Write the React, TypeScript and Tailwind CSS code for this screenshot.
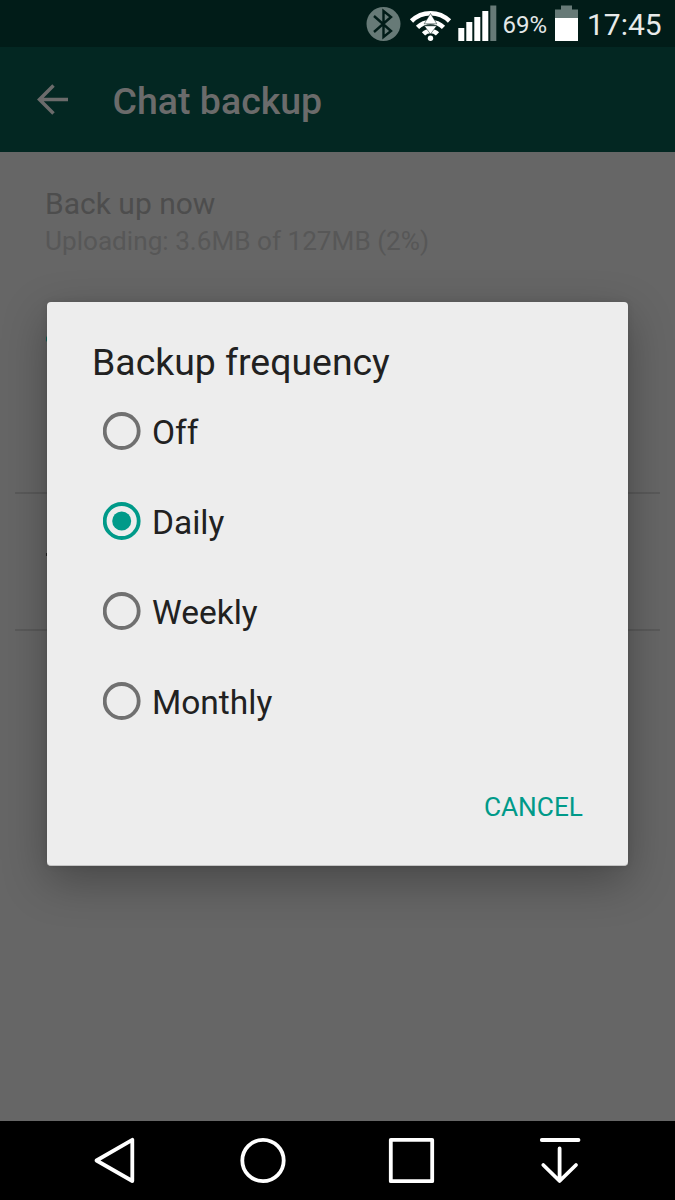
import { ReactNode } from "react";

const options = ["Off", "Daily", "Weekly", "Monthly"];

function StatusBar() {
  return (
    <div className="flex h-[47px] w-full bg-[#011c18]">
      <svg width="675" height="47" viewBox="0 0 675 47" className="absolute">
        {/* Bluetooth */}
        <circle cx="383.5" cy="24" r="17" fill="#677a77" />
        <path
          d="M374 16 L391 31 L383.5 37 V11 L391 17 L374 32"
          fill="none"
          stroke="#011c18"
          strokeWidth="2.4"
        />
        {/* Wi-Fi */}
        <g fill="none" stroke="#fff" strokeWidth="4.6">
          <path d="M411.5 21 A27 27 0 0 1 449.5 21" />
          <path d="M417.5 27.3 A18.5 18.5 0 0 1 443.5 27.3" />
          <path d="M423.5 33.8 A10 10 0 0 1 437.5 33.8" />
        </g>
        <circle cx="430.5" cy="38.3" r="2.7" fill="#fff" />
        <path
          d="M430.5 13.5 L436.8 23.8 H424.2 Z M424.2 25.8 H436.8 L430.5 34 Z"
          fill="#fff"
          stroke="#011c18"
          strokeWidth="0.5"
        />
        {/* Signal */}
        <g fill="#fff">
          <rect x="458.3" y="28" width="6" height="13" />
          <rect x="466.3" y="22" width="6" height="19" />
          <rect x="474.3" y="17" width="6" height="24" />
          <rect x="482.3" y="11" width="6" height="30" />
          <rect x="490.3" y="5.5" width="6" height="35.5" fill="#677a77" />
        </g>
        {/* Battery */}
        <path d="M561 5.5 H572 V9.5 H578 V18 H555 V9.5 H561 Z" fill="#677a77" />
        <rect x="555" y="18" width="23" height="23" fill="#fff" />
      </svg>
      <span className="ml-[502.5px] w-[84.5px] pt-[9px] text-[24px] leading-[32px] text-[#e4e8e8]">
        69%
      </span>
      <span className="pt-[5px] text-[30px] leading-[40px] text-[#e8ebea]">17:45</span>
    </div>
  );
}

function Radio({ checked, children }: { checked: boolean; children: ReactNode }) {
  return (
    <label className="flex h-[90px] items-center">
      <svg width="38" height="38" viewBox="0 0 38 38" className="mr-[11px] shrink-0">
        <circle
          cx="18.7"
          cy="19"
          r="17"
          fill="none"
          stroke={checked ? "#009a89" : "#707070"}
          strokeWidth="3.8"
        />
        {checked && <circle cx="18.7" cy="19" r="9.5" fill="#009a89" />}
      </svg>
      <span className="pt-[4px] text-[33.5px] leading-[40px]">{children}</span>
    </label>
  );
}

function NavBar() {
  return (
    <nav className="h-[79px] w-full bg-black">
      <svg
        width="675"
        height="79"
        viewBox="0 0 675 79"
        fill="none"
        stroke="#fff"
        strokeWidth="3.8"
        strokeLinecap="round"
        strokeLinejoin="round"
      >
        <path d="M96.5 39.5 L132.3 18.8 V60 Z" />
        <circle cx="263" cy="39.5" r="20.7" />
        <rect x="390.8" y="18.8" width="41.4" height="41.4" />
        <path d="M541.8 19 H578.5 M559.6 27.5 V59.5 M543.3 44 L559.6 60 L576 44" />
      </svg>
    </nav>
  );
}

export default function App() {
  return (
    <div className="relative flex h-[1200px] w-[675px] flex-col overflow-hidden bg-[#666666] font-['Roboto',sans-serif]">
      <StatusBar />

      <header className="flex h-[105px] items-center bg-[#032722] text-[#6b6b6b]">
        <svg width="32" height="32" viewBox="0 0 32 32" className="ml-[37px]">
          <path
            d="M31 15.5 H3 M16.5 1.5 L2.5 15.5 L16.5 29.5"
            fill="none"
            stroke="currentColor"
            strokeWidth="3.5"
          />
        </svg>
        <h1 className="ml-[43.5px] pt-[3px] text-[37.5px] leading-[44px] font-medium">
          Chat backup
        </h1>
      </header>

      <main className="flex grow flex-col">
        <div className="h-[184px] pt-[33px] pl-[45px]">
          <p className="text-[30px] leading-[38px] text-[#4d4d4d]">Back up now</p>
          <p className="mt-px text-[26.15px] leading-[34px] text-[#575757]">
            Uploading: 3.6MB of 127MB (2%)
          </p>
        </div>
        {/* Rows covered by the dialog, only their left edges show */}
        <div className="mx-[15px] h-[158px] border-b-2 border-[#5a5a5a] pl-[31px]">
          <div className="h-[6px] w-[4px] rounded-full bg-[#075e54]" />
        </div>
        <div className="mx-[15px] h-[137px] border-b-2 border-[#5a5a5a] pt-[59px] pl-[31px]">
          <div className="h-[3px] w-[4px] bg-[#222222]" />
        </div>
      </main>

      <NavBar />

      <div
        role="dialog"
        className="absolute top-[302px] left-[47px] flex h-[564px] w-[581px] flex-col rounded-[4px] border-b border-[#c4c4c4] bg-[#ededed] px-[45px] text-[#212121] shadow-[0_15px_45px_rgba(0,0,0,0.3),0_0_6px_rgba(0,0,0,0.1)]"
      >
        <h2 className="pt-[38px] text-[37.4px] leading-[44px]">Backup frequency</h2>
        <div className="mt-[2px] pl-[11px]">
          {options.map((option) => (
            <Radio key={option} checked={option === "Daily"}>
              {option}
            </Radio>
          ))}
        </div>
        <button className="mt-[44px] self-end text-[26.25px] leading-[34px] text-[#009a89]">
          CANCEL
        </button>
      </div>
    </div>
  );
}
